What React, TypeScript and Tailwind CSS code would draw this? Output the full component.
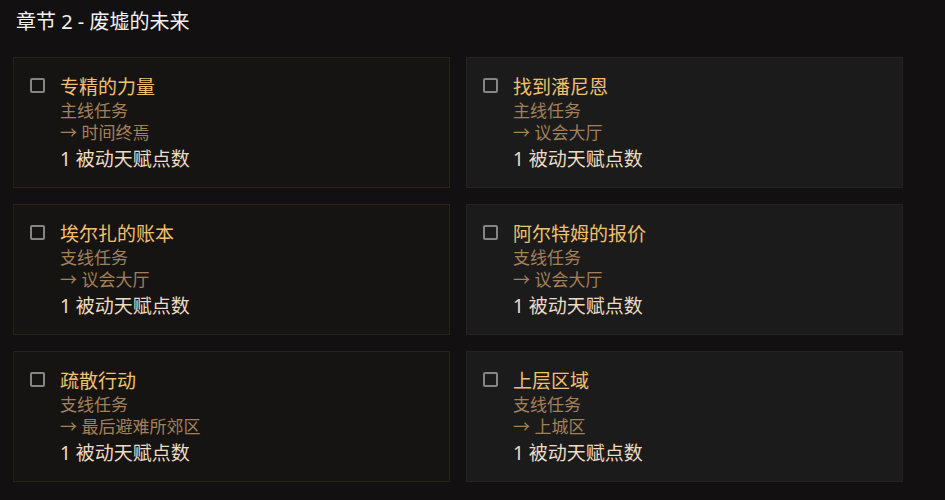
import React from "react";

interface Quest {
  title: string;
  kind: string;
  zone: string;
  reward: string;
}

const quests: Quest[] = [
  { title: "专精的力量", kind: "主线任务", zone: "时间终焉", reward: "1 被动天赋点数" },
  { title: "找到潘尼恩", kind: "主线任务", zone: "议会大厅", reward: "1 被动天赋点数" },
  { title: "埃尔扎的账本", kind: "支线任务", zone: "议会大厅", reward: "1 被动天赋点数" },
  { title: "阿尔特姆的报价", kind: "支线任务", zone: "议会大厅", reward: "1 被动天赋点数" },
  { title: "疏散行动", kind: "支线任务", zone: "最后避难所郊区", reward: "1 被动天赋点数" },
  { title: "上层区域", kind: "支线任务", zone: "上城区", reward: "1 被动天赋点数" },
];

function QuestCard({ quest, alt }: { quest: Quest; alt: boolean }) {
  return (
    <div
      className={
        alt
          ? "flex gap-[15px] border border-[#242424] bg-[#1b1b1b] px-4 pt-4 pb-[15px]"
          : "flex gap-[15px] border border-[#2a2117] bg-[#161412] px-4 pt-4 pb-[15px]"
      }
    >
      <div className="pt-[4px]">
        <div className="h-[15px] w-[15px] rounded-[2px] border-2 border-[#858585]" />
      </div>
      <div className="flex flex-col">
        <div className="text-[19px] leading-[26px] text-[#f2c06e]">{quest.title}</div>
        <div className="text-[17px] leading-[22px] text-[#a3805a]">{quest.kind}</div>
        <div className="text-[17px] leading-[22px] text-[#a3805a]">→ {quest.zone}</div>
        <div className="mt-[2px] text-[19px] leading-[26px] text-[#ecdcc4]">{quest.reward}</div>
      </div>
    </div>
  );
}

export default function App() {
  return (
    <div
      className="min-h-[500px] w-full bg-[#121010] px-[13px] pt-2"
      style={{ fontFamily: '"Noto Sans", "Noto Sans CJK SC", sans-serif' }}
    >
      <h2 className="pl-[3px] text-[20px] leading-[28px] text-[#f2f2f2]">章节 2 - 废墟的未来</h2>
      <div className="mt-[21px] grid w-[890px] grid-cols-2 gap-4">
        {quests.map((q, i) => (
          <QuestCard key={q.title} quest={q} alt={i % 2 === 1} />
        ))}
      </div>
    </div>
  );
}
